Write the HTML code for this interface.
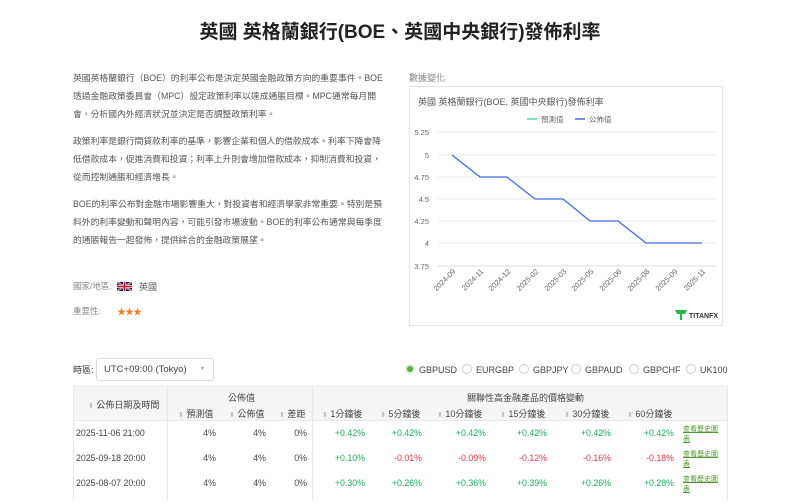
<!DOCTYPE html>
<html><head><meta charset="utf-8"><style>
*{margin:0;padding:0;box-sizing:border-box}
body{width:800px;height:500px;overflow:hidden;background:#fff;font-family:"Liberation Sans","Noto Sans CJK TC",sans-serif;color:#333;position:relative}
.a{position:absolute;white-space:nowrap}
h1{position:absolute;top:17px;left:0;width:800px;text-align:center;font-size:19px;font-weight:bold;color:#222}
.p{position:absolute;left:73px;font-size:8.8px;line-height:18px;color:#555;white-space:nowrap}
.s{font-size:9px;color:#444}
.g{color:#19b05a}.r{color:#f0353f}
.radio{display:inline-block;width:10px;height:10px;border:1px solid #ccc;border-radius:50%;vertical-align:-1px;margin-right:4px}
.sort{color:#bbb;font-size:7px}
</style></head><body>
<h1>英國 英格蘭銀行(BOE、英國中央銀行)發佈利率</h1>
<div class="p" style="top:69px">英國英格蘭銀行（BOE）的利率公布是決定英國金融政策方向的重要事件。BOE<br>透過金融政策委員會（MPC）設定政策利率以達成通脹目標。MPC通常每月開<br>會，分析國內外經濟狀況並決定是否調整政策利率。</div>
<div class="p" style="top:132px">政策利率是銀行間貸款利率的基準，影響企業和個人的借款成本。利率下降會降<br>低借款成本，促進消費和投資；利率上升則會增加借款成本，抑制消費和投資，<br>從而控制通脹和經濟增長。</div>
<div class="p" style="top:195px">BOE的利率公布對金融市場影響重大，對投資者和經濟學家非常重要。特別是預<br>料外的利率變動和聲明內容，可能引發市場波動。BOE的利率公布通常與每季度<br>的通脹報告一起發佈，提供綜合的金融政策展望。</div>
<div class="a" style="left:73px;top:280px;font-size:8.5px;color:#888">國家/地區:</div>
<svg class="a" style="left:117px;top:282px" width="15" height="9" viewBox="0 0 60 36"><rect width="60" height="36" fill="#012169"/><path d="M0,0L60,36M60,0L0,36" stroke="#fff" stroke-width="7"/><path d="M0,0L60,36M60,0L0,36" stroke="#c8102e" stroke-width="3"/><path d="M30,0V36M0,18H60" stroke="#fff" stroke-width="11"/><path d="M30,0V36M0,18H60" stroke="#c8102e" stroke-width="6"/></svg>
<div class="a" style="left:139px;top:280px;font-size:9px;color:#555">英國</div>
<div class="a" style="left:73px;top:305px;font-size:8.5px;color:#888">重要性:</div>
<div class="a" style="left:117px;top:305px;font-size:9px;color:#f07c2a;letter-spacing:-1px">★★★</div>

<div class="a" style="left:409px;top:71px;font-size:9px;color:#888">數據變化</div>
<div class="a" style="left:409px;top:86px;width:314px;height:240px;border:1px solid #e4e4e4"></div>
<div class="a" style="left:418px;top:95px;font-size:9px;color:#555">英國 英格蘭銀行(BOE, 英國中央銀行)發佈利率</div>
<svg class="a" style="left:409px;top:86px" width="314" height="240">
<g font-family="Liberation Sans,sans-serif" font-size="7.5" fill="#666">
<line x1="118" y1="33" x2="128" y2="33" stroke="#5cd6b0" stroke-width="1.5"/><text x="132" y="36">預測值</text>
<line x1="166" y1="33" x2="176" y2="33" stroke="#3b6fe0" stroke-width="1.5"/><text x="180" y="36">公佈值</text>
<g stroke="#e8e8e8"><line x1="29" y1="46" x2="307" y2="46"/><line x1="29" y1="69" x2="307" y2="69"/><line x1="29" y1="91" x2="307" y2="91"/><line x1="29" y1="113" x2="307" y2="113"/><line x1="29" y1="135" x2="307" y2="135"/><line x1="29" y1="157" x2="307" y2="157"/><line x1="29" y1="180" x2="307" y2="180" stroke="#d6dbe8"/></g>
<g text-anchor="end"><text x="20" y="49">5.25</text><text x="20" y="72">5</text><text x="20" y="94">4.75</text><text x="20" y="116">4.5</text><text x="20" y="138">4.25</text><text x="20" y="160">4</text><text x="20" y="183">3.75</text></g>
<polyline points="43,69 71,91 98,91 126,113 154,113 181,135 209,135 237,157 265,157 293,157" fill="none" stroke="#3b6fe0" stroke-width="1.3"/>
<g text-anchor="end">
<text transform="translate(47,186) rotate(-45)">2024-09</text><text transform="translate(75,186) rotate(-45)">2024-11</text><text transform="translate(102,186) rotate(-45)">2024-12</text><text transform="translate(130,186) rotate(-45)">2025-02</text><text transform="translate(158,186) rotate(-45)">2025-03</text><text transform="translate(185,186) rotate(-45)">2025-05</text><text transform="translate(213,186) rotate(-45)">2025-06</text><text transform="translate(241,186) rotate(-45)">2025-08</text><text transform="translate(269,186) rotate(-45)">2025-09</text><text transform="translate(297,186) rotate(-45)">2025-11</text></g>
<path d="M266,224h12l-2,4h-3v6h-2v-6h-3z" fill="#2db34a"/>
<text x="280" y="232" font-size="7" font-weight="bold" fill="#333">TITANFX</text>
</g></svg>

<div class="a" style="left:73px;top:363px;font-size:9px;color:#333">時區:</div>
<div class="a" style="left:96px;top:358px;width:118px;height:23px;border:1px solid #ddd;border-radius:3px;font-size:9.5px;padding:5px 7px;color:#444">UTC+09:00 (Tokyo)<span style="position:absolute;right:8px;top:7px;font-size:5px;color:#999">▼</span></div>
<div class="a" style="left:405px;top:364px;font-size:9px;color:#444"><span class="radio" style="border:2px solid #d8ecd0;background:#5cb040"></span>GBPUSD</div>
<div class="a" style="left:462px;top:364px;font-size:9px;color:#444"><span class="radio"></span>EURGBP</div>
<div class="a" style="left:519px;top:364px;font-size:9px;color:#444"><span class="radio"></span>GBPJPY</div>
<div class="a" style="left:571px;top:364px;font-size:9px;color:#444"><span class="radio"></span>GBPAUD</div>
<div class="a" style="left:629px;top:364px;font-size:9px;color:#444"><span class="radio"></span>GBPCHF</div>
<div class="a" style="left:686px;top:364px;font-size:9px;color:#444"><span class="radio"></span>UK100</div>

<div class="a" style="left:73px;top:386px;width:655px;height:35px;background:#f5f5f5;border:1px solid #e8e8e8"></div>
<div class="a" style="left:167px;top:386px;width:1px;height:114px;background:#e8e8e8"></div>
<div class="a" style="left:312px;top:386px;width:1px;height:114px;background:#e8e8e8"></div>
<div class="a" style="left:73px;top:421px;width:1px;height:79px;background:#e8e8e8"></div>
<div class="a" style="left:727px;top:421px;width:1px;height:79px;background:#e8e8e8"></div>
<div class="s a" style="left:88px;top:398px"><span class="sort">⬍</span> 公佈日期及時間</div>
<div class="s a" style="left:228px;top:391px">公佈值</div>
<div class="s a" style="left:467px;top:391px">關聯性高金融產品的價格變動</div>
<div class="s a" style="left:178px;top:407px"><span class="sort">⬍</span> 預測值</div>
<div class="s a" style="left:229px;top:407px"><span class="sort">⬍</span> 公佈值</div>
<div class="s a" style="left:279px;top:407px"><span class="sort">⬍</span> 差距</div>
<div class="s a" style="left:322px;top:407px"><span class="sort">⬍</span> 1分鐘後</div>
<div class="s a" style="left:380px;top:407px"><span class="sort">⬍</span> 5分鐘後</div>
<div class="s a" style="left:437px;top:407px"><span class="sort">⬍</span> 10分鐘後</div>
<div class="s a" style="left:500px;top:407px"><span class="sort">⬍</span> 15分鐘後</div>
<div class="s a" style="left:564px;top:407px"><span class="sort">⬍</span> 30分鐘後</div>
<div class="s a" style="left:627px;top:407px"><span class="sort">⬍</span> 60分鐘後</div>

<div style="position:absolute;left:0;top:428px;font-size:8.8px;color:#444">
<div class="a" style="left:76px;top:0">2025-11-06 21:00</div><div class="a" style="left:76px;top:25px">2025-09-18 20:00</div><div class="a" style="left:76px;top:50px">2025-08-07 20:00</div>
</div>
<table style="position:absolute;left:168px;top:428px;border-collapse:collapse;font-size:8.8px;color:#444;text-align:right">
<tr style="height:25px;vertical-align:top"><td style="width:48px">4%</td><td style="width:50px">4%</td><td style="width:41px">0%</td><td style="width:58px" class="g">+0.42%</td><td style="width:57px" class="g">+0.42%</td><td style="width:64px" class="g">+0.42%</td><td style="width:61px" class="g">+0.42%</td><td style="width:64px" class="g">+0.42%</td><td style="width:63px" class="g">+0.42%</td></tr>
<tr style="height:25px;vertical-align:top"><td>4%</td><td>4%</td><td>0%</td><td class="g">+0.10%</td><td class="r">-0.01%</td><td class="r">-0.09%</td><td class="r">-0.12%</td><td class="r">-0.16%</td><td class="r">-0.18%</td></tr>
<tr style="height:25px;vertical-align:top"><td>4%</td><td>4%</td><td>0%</td><td class="g">+0.30%</td><td class="g">+0.26%</td><td class="g">+0.36%</td><td class="g">+0.39%</td><td class="g">+0.26%</td><td class="g">+0.28%</td></tr>
</table>
<div class="a" style="left:683px;top:425px;width:36px;font-size:7px;line-height:10px;color:#4c9a2a;text-decoration:underline;white-space:normal">查看歷史圖表</div>
<div class="a" style="left:683px;top:450px;width:36px;font-size:7px;line-height:10px;color:#4c9a2a;text-decoration:underline;white-space:normal">查看歷史圖表</div>
<div class="a" style="left:683px;top:475px;width:36px;font-size:7px;line-height:10px;color:#4c9a2a;text-decoration:underline;white-space:normal">查看歷史圖表</div>
</body></html>
